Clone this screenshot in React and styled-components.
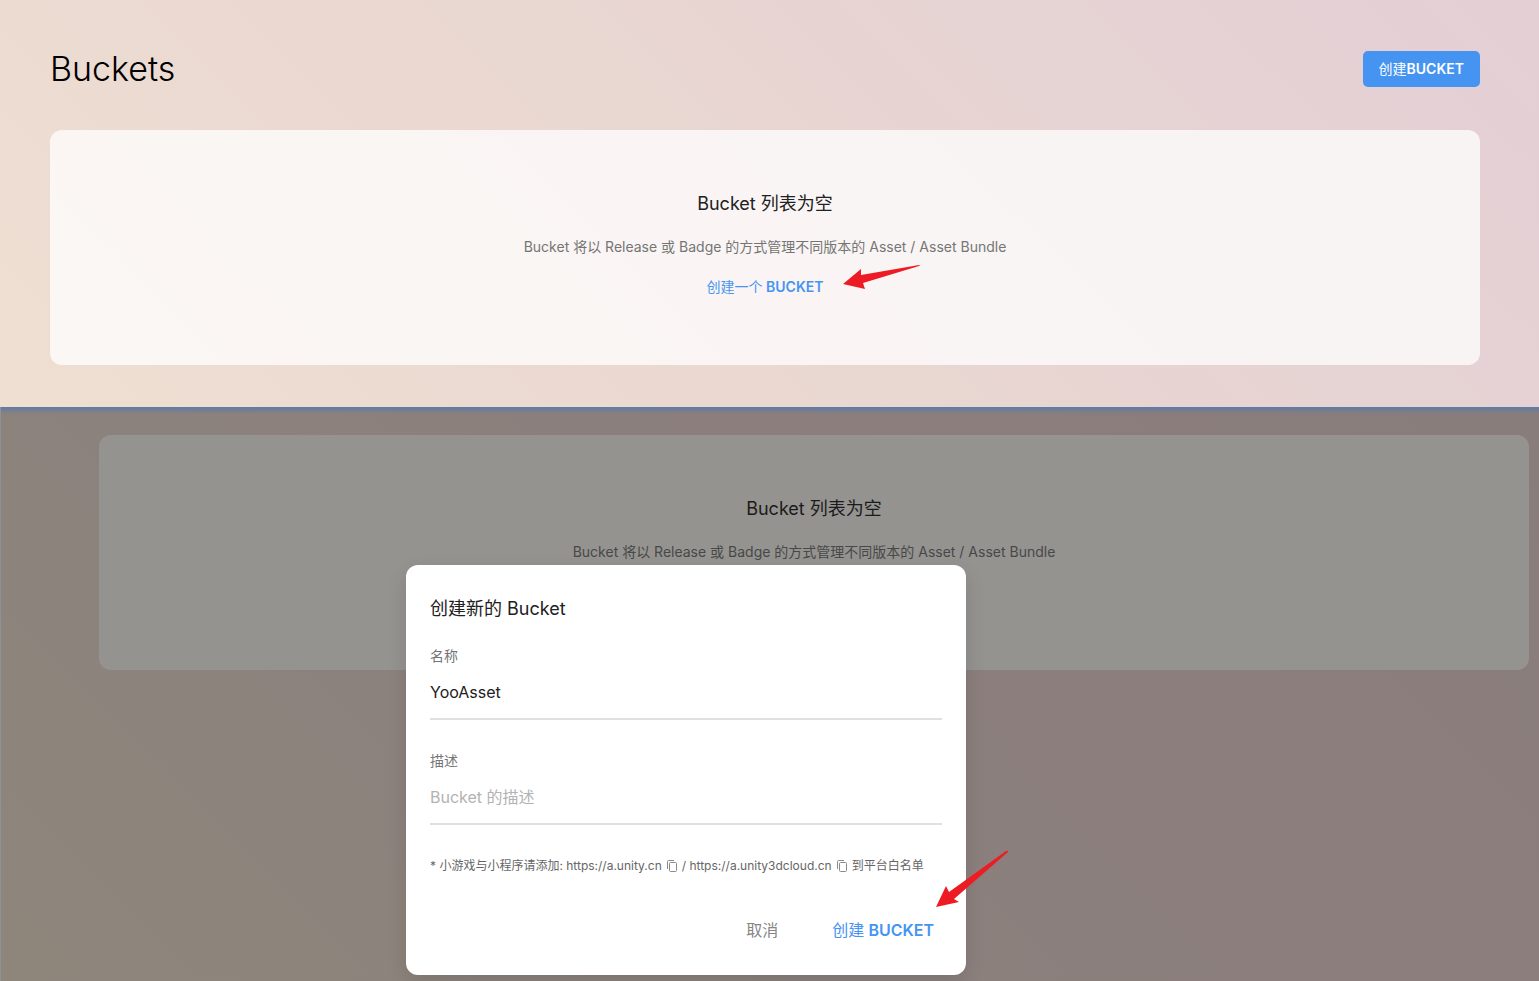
import React, { useState } from 'react';
import styled, { createGlobalStyle } from 'styled-components';

const GlobalStyle = createGlobalStyle`
    * {
        box-sizing: border-box;
    }

    body {
        margin: 0;
        font-family: Inter, "Noto Sans CJK SC", sans-serif;
        font-size: 14px;
        color: #212121;
    }

    h1, h2, p {
        margin: 0;
        font-weight: 400;
    }

    button, input {
        font-family: inherit;
    }
`;

const Page = styled.div`
    display: flex;
    flex-direction: column;
    min-height: 100vh;
`;

const Overview = styled.section`
    padding: 48px 59px 42px 50px;
    background: linear-gradient(45deg, #efdfd2 0%, #ead8d1 40%, #e6d3d3 70%, #e4cfd5 100%);
`;

const Header = styled.header`
    display: flex;
    align-items: center;
    justify-content: space-between;
    height: 42px;
    margin-bottom: 40px;
`;

const Title = styled.h1`
    font-size: 34px;
    font-weight: 300;
    line-height: 40px;
    color: #000;
`;

const PrimaryButton = styled.button`
    height: 36px;
    padding: 0 16px 2px;
    border: 0;
    border-radius: 5px;
    background: #4694f2;
    color: #fff;
    font-size: 14px;
    font-weight: 600;
`;

const Han = styled.span`
    font-weight: 400;
`;

const Card = styled.div`
    display: flex;
    flex-direction: column;
    align-items: center;
    height: 235px;
    padding-top: 60px;
    border-radius: 12px;
    background: ${({ $dimmed }) => ($dimmed ? '#949390' : 'rgba(255, 255, 255, .75)')};
    color: ${({ $dimmed }) => ($dimmed ? '#1c1b1b' : '#212121')};
`;

const CardTitle = styled.h2`
    font-size: 18px;
    line-height: 28px;
`;

const CardText = styled.p`
    margin-top: 18px;
    line-height: 22px;
    color: ${({ $dimmed }) => ($dimmed ? '#484848' : '#757575')};
`;

const LinkRow = styled.div`
    position: relative;
    margin-top: 18px;
`;

const LinkButton = styled.button`
    display: block;
    padding: 0;
    border: 0;
    background: none;
    color: #4694f2;
    font-size: 14px;
    font-weight: 600;
    line-height: 22px;
`;

const SmallArrow = styled.svg`
    position: absolute;
    top: -12px;
    left: calc(100% + 19px);
`;

const Scene = styled.section`
    position: relative;
    flex: 1;
    padding: 28px 10px 0 98px;
    border-left: 1px solid #8c9296;
    background:
        linear-gradient(#5f7ba5, rgba(95, 123, 165, 0)) top / 100% 7px no-repeat,
        linear-gradient(45deg, #8e867b 0%, #8c827d 30%, #8b7e7d 65%, #897d7b 100%);
`;

const Overlay = styled.div`
    position: absolute;
    inset: 0;
    display: flex;
    justify-content: center;
    align-items: flex-end;
    padding: 0 168px 6px 0;
`;

const Dialog = styled.form`
    position: relative;
    width: 560px;
    padding: 30px 24px 28px;
    border-radius: 12px;
    background: #fff;
    box-shadow: 0 8px 20px rgba(0, 0, 0, .12);
`;

const Field = styled.div`
    margin-top: ${({ $first }) => ($first ? 22 : 30)}px;
`;

const Label = styled.label`
    display: block;
    line-height: 22px;
    color: #757575;
`;

const Input = styled.input`
    display: block;
    width: 100%;
    height: 53px;
    padding: 0 0 2px;
    border: 0;
    border-bottom: 2px solid #e0e0e0;
    outline: 0;
    background: none;
    color: #212121;
    font-size: 16px;

    &::placeholder {
        color: #b3b3b3;
        opacity: 1;
    }
`;

const Note = styled.p`
    margin-top: 30px;
    font-size: 12px;
    line-height: 22px;
    color: #666;
    white-space: nowrap;
`;

const CopyButton = styled.button`
    width: 12px;
    height: 12px;
    margin: 0 4px;
    padding: 0;
    border: 0;
    background: none;
    color: #8a8a8a;
    vertical-align: -2px;

    svg {
        display: block;
    }
`;

const Actions = styled.div`
    display: flex;
    justify-content: flex-end;
    gap: 38px;
    margin-top: 34px;
`;

const ActionButton = styled.button`
    height: 36px;
    padding: 0 8px;
    border: 0;
    background: none;
    color: ${({ $primary }) => ($primary ? '#4694f2' : '#858585')};
    font-size: 16px;
    font-weight: ${({ $primary }) => ($primary ? 600 : 400)};
`;

const LargeArrow = styled.svg`
    position: absolute;
    right: -43px;
    bottom: 67px;
`;

const CopyIcon = () => (
    <svg width="12" height="12" viewBox="0 0 12 12" fill="none" stroke="currentColor" aria-hidden="true">
        <path d="M1.5 9V1.5a1 1 0 0 1 1-1H8" />
        <rect x="3.5" y="2.5" width="7" height="9" rx="1" />
    </svg>
);

const CopyLink = ({ url }) => (
    <>
        {url}
        <CopyButton type="button" aria-label={`复制 ${url}`}>
            <CopyIcon />
        </CopyButton>
    </>
);

const EmptyState = ({ dimmed, children }) => (
    <Card $dimmed={dimmed}>
        <CardTitle>Bucket 列表为空</CardTitle>
        <CardText $dimmed={dimmed}>
            Bucket 将以 Release 或 Badge 的方式管理不同版本的 Asset / Asset Bundle
        </CardText>
        {children}
    </Card>
);

const CreateDialog = () => {
    const [name, setName] = useState('YooAsset');
    const [description, setDescription] = useState('');

    return (
        <Dialog role="dialog" aria-labelledby="dialog-title" onSubmit={e => e.preventDefault()}>
            <CardTitle id="dialog-title">创建新的 Bucket</CardTitle>
            <Field $first>
                <Label htmlFor="name">名称</Label>
                <Input id="name" value={name} onChange={e => setName(e.target.value)} />
            </Field>
            <Field>
                <Label htmlFor="description">描述</Label>
                <Input
                    id="description"
                    placeholder="Bucket 的描述"
                    value={description}
                    onChange={e => setDescription(e.target.value)}
                />
            </Field>
            <Note>
                * 小游戏与小程序请添加: <CopyLink url="https://a.unity.cn" />
                / <CopyLink url="https://a.unity3dcloud.cn" />
                到平台白名单
            </Note>
            <Actions>
                <ActionButton type="button">取消</ActionButton>
                <ActionButton type="submit" $primary><Han>创建</Han> BUCKET</ActionButton>
            </Actions>
            <LargeArrow width="74" height="58" viewBox="0 0 74 58" fill="#ed1c24" aria-hidden="true">
                <path d="M1 57L11 36L14 42L71 1Q74 0 73 2L19 49L24 52Z" />
            </LargeArrow>
        </Dialog>
    );
};

const App = () => {
    return (
        <Page>
            <GlobalStyle />
            <Overview>
                <Header>
                    <Title>Buckets</Title>
                    <PrimaryButton type="button"><Han>创建</Han>BUCKET</PrimaryButton>
                </Header>
                <EmptyState>
                    <LinkRow>
                        <LinkButton type="button"><Han>创建一个</Han> BUCKET</LinkButton>
                        <SmallArrow width="80" height="26" viewBox="0 0 80 26" fill="#ed1c24" aria-hidden="true">
                            <path d="M1 20L19 5L19 11L77 1Q79 1 77 2L21 19L23 25Z" />
                        </SmallArrow>
                    </LinkRow>
                </EmptyState>
            </Overview>
            <Scene>
                <EmptyState dimmed />
                <Overlay>
                    <CreateDialog />
                </Overlay>
            </Scene>
        </Page>
    );
};

export default App;
